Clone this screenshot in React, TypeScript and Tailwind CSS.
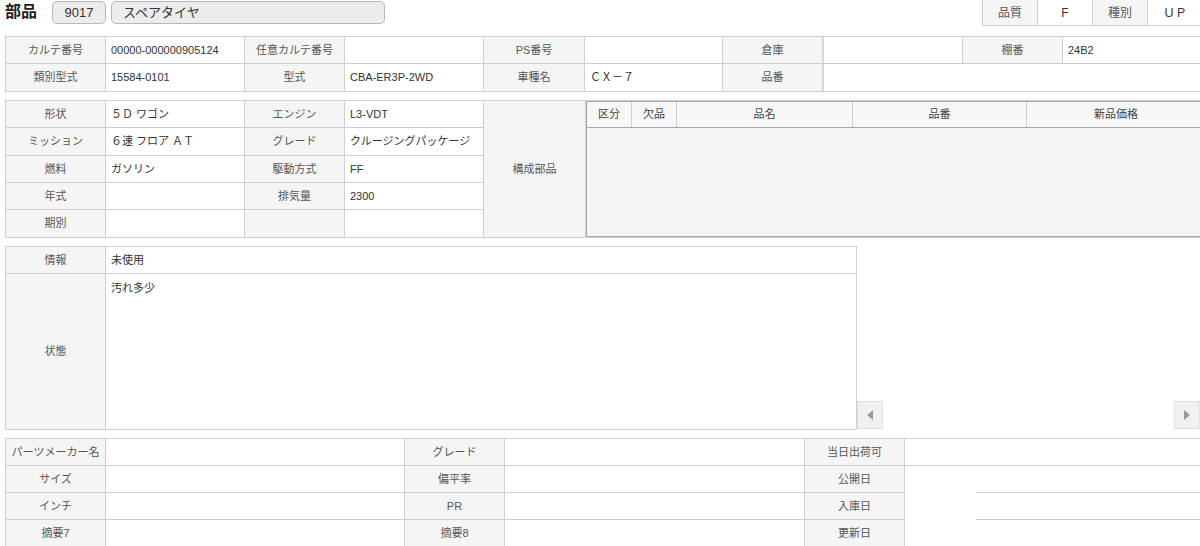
import React from "react";

const FONT = "font-['Liberation_Sans','Noto_Sans_CJK_JP',sans-serif]";
const L =
  "border-r border-b border-[#cfcfcf] bg-[#f5f5f5] text-[#555] flex items-center justify-center whitespace-nowrap overflow-hidden";
const V =
  "border-r border-b border-[#cfcfcf] bg-white text-[#333] flex items-center pl-[5px] whitespace-nowrap overflow-hidden";

function Header() {
  return (
    <div className="flex h-[36px] items-start">
      <div className="flex items-start pl-[5px] pt-[1px]">
        <div className="text-[16px] font-bold text-[#222] leading-[22px] w-[47px]">部品</div>
        <div className="h-[23px] w-[54px] rounded-[5px] border border-[#b8b8b8] bg-[#ececec] text-[13px] text-[#333] flex items-center justify-center">
          9017
        </div>
        <div className="ml-[5px] h-[23px] w-[274px] rounded-[5px] border border-[#b8b8b8] bg-[#ececec] text-[13px] text-[#333] flex items-center pl-[11px]">
          スペアタイヤ
        </div>
      </div>
      <div className="ml-auto mr-[-3px] flex h-[26px] border-l border-[#cfcfcf] text-[12px]">
        <div className={L + " w-[55px]"}>品質</div>
        <div className={V.replace("pl-[5px]", "justify-center") + " w-[55px]"}>F</div>
        <div className={L + " w-[55px]"}>種別</div>
        <div className={V.replace("pl-[5px]", "justify-center") + " w-[55px]"}>ＵＰ</div>
      </div>
    </div>
  );
}

function Table1() {
  return (
    <div className="ml-[5px] w-[1210px] grid grid-cols-[100px_139px_100px_139px_101px_138px_100px_140px_100px_153px] grid-rows-[27px_28px] border-t border-l border-[#cfcfcf]">
      <div className={L}>カルテ番号</div>
      <div className={V}>00000-000000905124</div>
      <div className={L}>任意カルテ番号</div>
      <div className={V}></div>
      <div className={L}>PS番号</div>
      <div className={V}></div>
      <div className={L}>倉庫</div>
      <div className={V + " border-l border-l-[#dcdcdc]"}></div>
      <div className={L}>棚番</div>
      <div className={V}>24B2</div>

      <div className={L}>類別型式</div>
      <div className={V}>15584-0101</div>
      <div className={L}>型式</div>
      <div className={V}>CBA-ER3P-2WD</div>
      <div className={L}>車種名</div>
      <div className={V}>ＣＸ－７</div>
      <div className={L}>品番</div>
      <div className={V + " col-span-3 border-l border-l-[#dcdcdc]"}></div>
    </div>
  );
}

function Table2() {
  return (
    <div className="ml-[5px] mt-[8px] w-[1210px] grid grid-cols-[100px_139px_100px_139px_102px_620px] grid-rows-[27px_28px_27px_27px_28px] border-t border-l border-[#cfcfcf]">
      <div className={L}>形状</div>
      <div className={V}>５Ｄ ワゴン</div>
      <div className={L}>エンジン</div>
      <div className={V}>L3-VDT</div>
      <div className={L + " row-span-5 bg-[#f5f5f5]"}>構成部品</div>
      <div className="row-span-5 border-b border-[#cfcfcf] bg-white">
        <div className="h-full border border-[#a8a8a8] bg-[#f4f4f4] flex flex-col">
          <div className="h-[26px] flex border-b border-[#a8a8a8] bg-[#f7f7f7] text-[#444]">
            <div className="w-[45px] border-r border-[#cfcfcf] flex items-center justify-center">区分</div>
            <div className="w-[45px] border-r border-[#cfcfcf] flex items-center justify-center">欠品</div>
            <div className="w-[176px] border-r border-[#cfcfcf] flex items-center justify-center">品名</div>
            <div className="w-[174px] border-r border-[#cfcfcf] flex items-center justify-center">品番</div>
            <div className="w-[178px] flex items-center justify-center">新品価格</div>
          </div>
          <div className="flex-1" />
        </div>
      </div>

      <div className={L}>ミッション</div>
      <div className={V}>６速 フロア ＡＴ</div>
      <div className={L}>グレード</div>
      <div className={V}>クルージングパッケージ</div>

      <div className={L}>燃料</div>
      <div className={V}>ガソリン</div>
      <div className={L}>駆動方式</div>
      <div className={V}>FF</div>

      <div className={L}>年式</div>
      <div className={V}></div>
      <div className={L}>排気量</div>
      <div className={V}>2300</div>

      <div className={L}>期別</div>
      <div className={V}></div>
      <div className={L}></div>
      <div className={V}></div>
    </div>
  );
}

function ScrollBtn({ dir }: { dir: "l" | "r" }) {
  return (
    <div className="h-[28px] w-[26px] border border-[#e2e2e2] bg-[#f1f1f1] flex items-center justify-center">
      <svg width="6" height="10" viewBox="0 0 6 10">
        {dir === "l" ? (
          <polygon points="6,0 6,10 0,5" fill="#9a9a9a" />
        ) : (
          <polygon points="0,0 0,10 6,5" fill="#9a9a9a" />
        )}
      </svg>
    </div>
  );
}

function Info() {
  return (
    <div className="mt-[8px] flex">
      <div className="ml-[5px] w-[852px] grid grid-cols-[100px_751px] grid-rows-[27px_156px] border-t border-l border-[#cfcfcf]">
        <div className={L}>情報</div>
        <div className={V}>未使用</div>
        <div className={L}>状態</div>
        <div className="border-r border-b border-[#cfcfcf] bg-white text-[#333] pl-[5px] pt-[6px]">汚れ多少</div>
      </div>
      <div className="flex-1 flex items-end justify-between pb-[1px]">
        <ScrollBtn dir="l" />
        <ScrollBtn dir="r" />
      </div>
    </div>
  );
}

function Bottom() {
  return (
    <div className="ml-[5px] mt-[8px] w-[1210px] grid grid-cols-[100px_299px_100px_300px_100px_305px] grid-rows-[27px_27px_27px_27px] border-t border-l border-[#cfcfcf]">
      <div className={L}>パーツメーカー名</div>
      <div className={V}></div>
      <div className={L}>グレード</div>
      <div className={V}></div>
      <div className={L}>当日出荷可</div>
      <div className={V}></div>

      <div className={L}>サイズ</div>
      <div className={V}></div>
      <div className={L}>偏平率</div>
      <div className={V}></div>
      <div className={L}>公開日</div>
      <div className="bg-white flex">
        <div className="w-[71px]" />
        <div className="flex-1 border-b border-[#cfcfcf]" />
      </div>

      <div className={L}>インチ</div>
      <div className={V}></div>
      <div className={L}>PR</div>
      <div className={V}></div>
      <div className={L}>入庫日</div>
      <div className="bg-white flex">
        <div className="w-[71px]" />
        <div className="flex-1 border-b border-[#cfcfcf]" />
      </div>

      <div className={L}>摘要7</div>
      <div className={V}></div>
      <div className={L}>摘要8</div>
      <div className={V}></div>
      <div className={L}>更新日</div>
      <div className="bg-white" />
    </div>
  );
}

export default function App() {
  return (
    <div className={"w-[1200px] h-[546px] overflow-hidden bg-white text-[11px] " + FONT}>
      <Header />
      <Table1 />
      <Table2 />
      <Info />
      <Bottom />
    </div>
  );
}
